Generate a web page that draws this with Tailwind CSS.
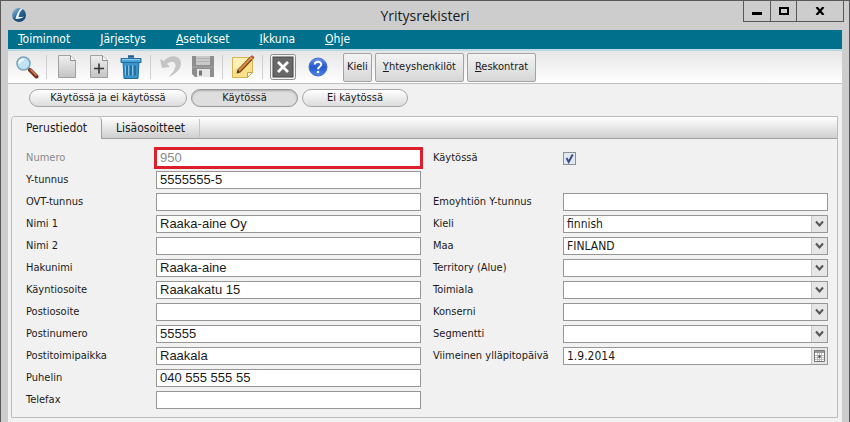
<!DOCTYPE html>
<html lang="fi">
  <head>
    <meta charset="UTF-8" />
    <meta name="viewport" content="width=device-width, initial-scale=1.0" />
    <title>Yritysrekisteri</title>
    <script src="https://cdn.jsdelivr.net/npm/@tailwindcss/browser@4"></script>
  </head>

  <body class="bg-[#cdcdcd] font-['DejaVu_Sans_Condensed','Noto_Sans',sans-serif] text-[11px] text-[#1a1a1a]">
    <div class="min-h-screen flex flex-col border-t border-x border-[#58585a] px-[7px]">
      <!-- Title bar -->
      <header class="flex items-start h-[29px]">
        <svg class="w-4 h-4 ml-[3px] mt-[6px]" viewBox="0 0 16 16" aria-hidden="true">
          <defs>
            <linearGradient id="orb" x1="0" y1="0" x2="1" y2="1">
              <stop offset="0" stop-color="#a9cbe0" />
              <stop offset=".45" stop-color="#2d6c9c" />
              <stop offset="1" stop-color="#0b3560" />
            </linearGradient>
          </defs>
          <circle cx="8" cy="8" r="7" fill="url(#orb)" />
          <path d="M9.5 1.5C7 4 5.5 8 4.5 12c3 0 6-.7 9-2.500-2 .5-4 .7-6 .5C8 7 9 4 12 1.500z" fill="#f4f8fb" />
          <path d="M2 11c2 3.500 7 4.500 11 .5-3 1.500-7 1.700-11-.5z" fill="#1c4a78" />
        </svg>
        <h1 class="flex-1 text-center text-[14px] leading-[30px] pl-[80px] font-['Open_Sans','Noto_Sans',sans-serif]">Yritysrekisteri</h1>
        <div class="flex h-[21px] mr-[-2px] border border-t-0 border-[#58585a] divide-x divide-[#58585a]">
          <button class="w-[27px] flex justify-center items-center" aria-label="Pienennä">
            <svg class="w-[10px] h-[10px]" viewBox="0 0 10 10"><path d="M0 6h10v3H0z" /></svg>
          </button>
          <button class="w-[26px] flex justify-center items-center" aria-label="Suurenna">
            <svg class="w-[10px] h-[8px]" viewBox="0 0 10 8"><path d="M1 1h8v6H1z" fill="none" stroke="#000" stroke-width="2" /></svg>
          </button>
          <button class="w-[46px] flex justify-center items-center" aria-label="Sulje">
            <svg class="w-[10px] h-[8px]" viewBox="0 0 10 8"><path d="M1.500 0l7 8M8.500 0l-7 8" stroke="#000" stroke-width="2.200" /></svg>
          </button>
        </div>
      </header>

      <main class="flex-1 bg-[#f1f1f1]">
        <!-- Menu -->
        <nav class="flex items-center gap-[30px] h-[19px] pl-[10px] bg-[#00708c] text-white text-[12px] leading-[19px]">
          <a href="#"><u>T</u>oiminnot</a>
          <a href="#"><u>J</u>ärjestys</a>
          <a href="#"><u>A</u>setukset</a>
          <a href="#"><u>I</u>kkuna</a>
          <a href="#"><u>O</u>hje</a>
        </nav>

        <!-- Toolbar -->
        <div class="flex items-center h-[35px] pl-[3px] border-t-2 border-t-[#b9d9e4] border-b border-b-[#bfbfbf] bg-linear-to-b from-[#e6e6e6] to-white">
          <button class="w-8 h-7 flex justify-center items-center" aria-label="Etsi">
            <svg class="w-6 h-6" viewBox="0 0 24 24">
              <path d="M13 13l3 3" stroke="#8a8a8a" stroke-width="2.500" />
              <path d="M15 15l6.500 6.500" stroke="#7b3320" stroke-width="4" stroke-linecap="round" />
              <path d="M15.500 14.500l6 6" stroke="#d48a63" stroke-width="1.200" />
              <circle cx="8.500" cy="8.500" r="6.500" fill="#bfe3f3" stroke="#7ba3b9" stroke-width="1.500" />
              <path d="M4.500 8.500c0-2.500 2-4 4.500-4" stroke="#fff" stroke-width="2" fill="none" />
            </svg>
          </button>
          <span class="w-px h-6 ml-[3px] mr-1 bg-[#cfcfcf]"></span>
          <button class="w-8 h-7 flex justify-center items-center" aria-label="Uusi">
            <svg class="w-6 h-6" viewBox="0 0 24 24">
              <defs>
                <linearGradient id="sheet" x1="0" y1="0" x2="0" y2="1">
                  <stop offset="0" stop-color="#f0f0f0" />
                  <stop offset="1" stop-color="#c4c4c4" />
                </linearGradient>
              </defs>
              <path d="M3.500.5h12l5 5v17h-17z" fill="url(#sheet)" stroke="#a0a0a0" />
              <path d="M15.500.5v5h5" fill="#fafafa" stroke="#8c8c8c" />
            </svg>
          </button>
          <button class="w-8 h-7 flex justify-center items-center" aria-label="Lisää kopio">
            <svg class="w-6 h-6" viewBox="0 0 24 24">
              <path d="M3.500.5h12l5 5v17h-17z" fill="url(#sheet)" stroke="#a0a0a0" />
              <path d="M15.500.5v5h5" fill="#fafafa" stroke="#8c8c8c" />
              <path d="M7 13.500h10M12 8.500v10" stroke="#333" stroke-width="1.600" />
            </svg>
          </button>
          <button class="w-8 h-7 flex justify-center items-center" aria-label="Poista">
            <svg class="w-6 h-[26px]" viewBox="0 0 24 26">
              <path d="M9 2.500h6" stroke="#1f618f" stroke-width="2.500" />
              <path d="M4 8h16l-1 16.500H5z" fill="#3a95cc" stroke="#226b9c" />
              <path d="M2 4.500h20v4H2z" fill="#4aa3d6" stroke="#226b9c" />
              <path d="M3 5.500h18" stroke="#8fcdec" />
              <path d="M8 11.500v10M12 11.500v10M16 11.500v10" stroke="#1d6697" stroke-width="1.500" />
              <path d="M9.500 11.500v10M13.500 11.500v10M6.500 11.500v10" stroke="#82c3e6" />
            </svg>
          </button>
          <span class="w-px h-6 ml-[3px] mr-1 bg-[#cfcfcf]"></span>
          <button class="w-8 h-7 flex justify-center items-center" aria-label="Kumoa">
            <svg class="w-6 h-6" viewBox="0 0 24 24">
              <path d="M1 4l2 9 8-1-3-3C11 6 16 6 16.500 10c.3 4-3 8-7 12 7-3 12.500-8 12.500-13.500C21.500 0 11-1 5 6z" fill="#c4c4c4" />
            </svg>
          </button>
          <button class="w-8 h-7 flex justify-center items-center" aria-label="Tallenna">
            <svg class="w-6 h-6" viewBox="0 0 24 24">
              <path d="M1 1h22v21H4l-3-3z" fill="#8e8e8e" />
              <path d="M5 1h14v9H5z" fill="#c9c9c9" />
              <path d="M5 3.500h14M5 6.500h14" stroke="#b2b2b2" />
              <path d="M6 14h13v8H6z" fill="#e6e6e6" />
              <path d="M8 15.500h3v5H8z" fill="#777" />
              <path d="M1 12h22" stroke="#a5a5a5" />
            </svg>
          </button>
          <span class="w-px h-6 ml-[3px] mr-1 bg-[#cfcfcf]"></span>
          <button class="w-8 h-7 flex justify-center items-center" aria-label="Muistiinpano">
            <svg class="w-6 h-6" viewBox="0 0 24 24">
              <path d="M1.500 2.500h20v15l-5 5h-15z" fill="#fae08a" stroke="#d9b452" />
              <path d="M2 3h19v4L2 15z" fill="#fdf0b8" />
              <path d="M21.500 17.500h-5v5z" fill="#fffbe6" stroke="#c7a24a" />
              <path d="M8 16L20 3.500" stroke="#7a4717" stroke-width="4" />
              <path d="M8 15.500L20 3" stroke="#dc9145" stroke-width="2" />
              <path d="M19 1.500l3.500 3 .8-2.500-2-1.700z" fill="#b65843" />
              <path d="M5.500 18.500l1-4 3 3z" fill="#4a3321" />
            </svg>
          </button>
          <span class="w-px h-6 ml-[3px] mr-1 bg-[#cfcfcf]"></span>
          <button class="w-8 h-7 flex justify-center items-center" aria-label="Sulje kortti">
            <svg class="w-[26px] h-[26px]" viewBox="0 0 26 26">
              <rect x=".5" y=".5" width="25" height="25" rx="2" fill="#f2f2f2" stroke="#8d8d8d" />
              <rect x="3" y="3" width="20" height="20" fill="#686868" stroke="#484848" />
              <path d="M8 8l10 10M18 8L8 18" stroke="#fff" stroke-width="2.800" />
            </svg>
          </button>
          <button class="w-8 h-7 ml-[3px] flex justify-center items-center" aria-label="Ohje">
            <svg class="w-5 h-5" viewBox="0 0 20 20">
              <defs>
                <linearGradient id="help" x1="0" y1="0" x2="0" y2="1">
                  <stop offset="0" stop-color="#6d97ea" />
                  <stop offset=".5" stop-color="#2458ce" />
                  <stop offset="1" stop-color="#4a86ee" />
                </linearGradient>
              </defs>
              <circle cx="10" cy="10" r="9" fill="url(#help)" stroke="#4a6cc0" />
              <path d="M6.800 7.500C7 3.800 13.300 4 13.200 7.500c0 2.200-3.200 2.300-3.200 4.700" fill="none" stroke="#fff" stroke-width="2" />
              <circle cx="10" cy="15" r="1.300" fill="#fff" />
            </svg>
          </button>
          <div class="flex gap-[3px] ml-[9px]">
            <button class="h-[29px] px-[3px] border border-[#a3a3a3] rounded-[2px] bg-linear-to-b from-[#f4f4f4] to-[#d6d6d6]">Kieli</button>
            <button class="h-[29px] px-[7px] border border-[#a3a3a3] rounded-[2px] bg-linear-to-b from-[#f4f4f4] to-[#d6d6d6]"><u>Y</u>hteyshenkilöt</button>
            <button class="h-[29px] px-[7px] border border-[#a3a3a3] rounded-[2px] bg-linear-to-b from-[#f4f4f4] to-[#d6d6d6]"><u>R</u>eskontrat</button>
          </div>
        </div>

        <!-- Filter -->
        <div class="flex gap-1 pt-[5px] pb-[9px] pl-[21px]">
          <button class="w-[158px] h-[18px] border border-[#a6a6a6] rounded-full bg-linear-to-b from-white to-[#dcdcdc] leading-4">Käytössä ja ei käytössä</button>
          <button class="w-[107px] h-[18px] border border-[#999] rounded-full bg-[#dedede] shadow-[inset_0_1px_2px_#aaa] leading-4">Käytössä</button>
          <button class="w-[106px] h-[18px] border border-[#a6a6a6] rounded-full bg-linear-to-b from-white to-[#dcdcdc] leading-4">Ei käytössä</button>
        </div>

        <!-- Card -->
        <section class="ml-[3px] mr-1 border border-[#bcbcbc] rounded-tl-[4px]">
          <div class="flex h-[22px] border-b border-[#a0a0a0] rounded-tl-[4px] bg-linear-to-b from-white to-[#cfcfcf] text-[12px]" role="tablist">
            <button class="w-[90px] h-[22px] bg-[#f1f1f1] border-r border-[#a0a0a0] rounded-t-[4px]" role="tab" aria-selected="true">Perustiedot</button>
            <button class="w-[98px] h-[18px] mt-[2px] border-r border-[#c4c4c4]" role="tab" aria-selected="false">Lisäosoitteet</button>
          </div>

          <form class="grid grid-cols-2 gap-x-3 pt-[10px] pb-2 pl-[14px] pr-[9px]">
            <div class="grid grid-cols-[130px_1fr] auto-rows-[18px] gap-y-1 content-start items-center">
              <label for="numero" class="text-[#8a8a8a]">Numero</label>
              <input id="numero" value="950" readonly class="w-full min-w-0 h-[18px] px-[3px] bg-white border border-[#979797] outline-3 outline-[#dc1f2b] -outline-offset-1 text-[#8a8a8a] font-['Liberation_Sans',sans-serif] text-[13px]" />
              <label for="ytunnus">Y-tunnus</label>
              <input id="ytunnus" value="5555555-5" class="w-full min-w-0 h-[18px] px-[3px] bg-white border border-[#979797] font-['Liberation_Sans',sans-serif] text-[13px]" />
              <label for="ovt">OVT-tunnus</label>
              <input id="ovt" class="w-full min-w-0 h-[18px] px-[3px] bg-white border border-[#979797] font-['Liberation_Sans',sans-serif] text-[13px]" />
              <label for="nimi1">Nimi 1</label>
              <input id="nimi1" value="Raaka-aine Oy" class="w-full min-w-0 h-[18px] px-[3px] bg-white border border-[#979797] font-['Liberation_Sans',sans-serif] text-[13px]" />
              <label for="nimi2">Nimi 2</label>
              <input id="nimi2" class="w-full min-w-0 h-[18px] px-[3px] bg-white border border-[#979797] font-['Liberation_Sans',sans-serif] text-[13px]" />
              <label for="hakunimi">Hakunimi</label>
              <input id="hakunimi" value="Raaka-aine" class="w-full min-w-0 h-[18px] px-[3px] bg-white border border-[#979797] font-['Liberation_Sans',sans-serif] text-[13px]" />
              <label for="katu">Käyntiosoite</label>
              <input id="katu" value="Raakakatu 15" class="w-full min-w-0 h-[18px] px-[3px] bg-white border border-[#979797] font-['Liberation_Sans',sans-serif] text-[13px]" />
              <label for="posti">Postiosoite</label>
              <input id="posti" class="w-full min-w-0 h-[18px] px-[3px] bg-white border border-[#979797] font-['Liberation_Sans',sans-serif] text-[13px]" />
              <label for="postinro">Postinumero</label>
              <input id="postinro" value="55555" class="w-full min-w-0 h-[18px] px-[3px] bg-white border border-[#979797] font-['Liberation_Sans',sans-serif] text-[13px]" />
              <label for="kaupunki">Postitoimipaikka</label>
              <input id="kaupunki" value="Raakala" class="w-full min-w-0 h-[18px] px-[3px] bg-white border border-[#979797] font-['Liberation_Sans',sans-serif] text-[13px]" />
              <label for="puhelin">Puhelin</label>
              <input id="puhelin" value="040 555 555 55" class="w-full min-w-0 h-[18px] px-[3px] bg-white border border-[#979797] font-['Liberation_Sans',sans-serif] text-[13px]" />
              <label for="telefax">Telefax</label>
              <input id="telefax" class="w-full min-w-0 h-[18px] px-[3px] bg-white border border-[#979797] font-['Liberation_Sans',sans-serif] text-[13px]" />
            </div>

            <div class="grid grid-cols-[130px_1fr] auto-rows-[18px] gap-y-1 content-start items-center">
              <label for="kaytossa">Käytössä</label>
              <div class="relative w-[13px] h-[13px]">
                <input id="kaytossa" type="checkbox" checked class="peer block appearance-none w-[13px] h-[13px] border border-[#8e8f8f] bg-[#e3e9f3]" />
                <svg class="absolute inset-0 w-[13px] h-[13px] pointer-events-none invisible peer-checked:visible" viewBox="0 0 13 13">
                  <path d="M3.500 6l2.200 4L9.700 2.500" fill="none" stroke="#3a4f86" stroke-width="2" />
                </svg>
              </div>
              <div class="col-span-2"></div>
              <label for="emo">Emoyhtiön Y-tunnus</label>
              <input id="emo" class="w-full min-w-0 h-[18px] px-[3px] bg-white border border-[#979797] text-[12px]" />
              <label for="kieli">Kieli</label>
              <div class="relative">
                <select id="kieli" class="block appearance-none w-full h-[18px] pl-[3px] pr-5 bg-white border border-[#979797] text-[12px] leading-4"><option>finnish</option></select>
                <svg class="absolute right-px top-px w-4 h-4 bg-[#e6e6e6] border-l border-[#c8c8c8] pointer-events-none" viewBox="0 0 15 16"><path d="M4 5.500l3.500 4 3.500-4" fill="none" stroke="#555" stroke-width="2" /></svg>
              </div>
              <label for="maa">Maa</label>
              <div class="relative">
                <select id="maa" class="block appearance-none w-full h-[18px] pl-[3px] pr-5 bg-white border border-[#979797] text-[12px] leading-4"><option>FINLAND</option></select>
                <svg class="absolute right-px top-px w-4 h-4 bg-[#e6e6e6] border-l border-[#c8c8c8] pointer-events-none" viewBox="0 0 15 16"><path d="M4 5.500l3.500 4 3.500-4" fill="none" stroke="#555" stroke-width="2" /></svg>
              </div>
              <label for="territory">Territory (Alue)</label>
              <div class="relative">
                <select id="territory" class="block appearance-none w-full h-[18px] pl-[3px] pr-5 bg-white border border-[#979797] text-[12px] leading-4"><option></option></select>
                <svg class="absolute right-px top-px w-4 h-4 bg-[#e6e6e6] border-l border-[#c8c8c8] pointer-events-none" viewBox="0 0 15 16"><path d="M4 5.500l3.500 4 3.500-4" fill="none" stroke="#555" stroke-width="2" /></svg>
              </div>
              <label for="toimiala">Toimiala</label>
              <div class="relative">
                <select id="toimiala" class="block appearance-none w-full h-[18px] pl-[3px] pr-5 bg-white border border-[#979797] text-[12px] leading-4"><option></option></select>
                <svg class="absolute right-px top-px w-4 h-4 bg-[#e6e6e6] border-l border-[#c8c8c8] pointer-events-none" viewBox="0 0 15 16"><path d="M4 5.500l3.500 4 3.500-4" fill="none" stroke="#555" stroke-width="2" /></svg>
              </div>
              <label for="konserni">Konserni</label>
              <div class="relative">
                <select id="konserni" class="block appearance-none w-full h-[18px] pl-[3px] pr-5 bg-white border border-[#979797] text-[12px] leading-4"><option></option></select>
                <svg class="absolute right-px top-px w-4 h-4 bg-[#e6e6e6] border-l border-[#c8c8c8] pointer-events-none" viewBox="0 0 15 16"><path d="M4 5.500l3.500 4 3.500-4" fill="none" stroke="#555" stroke-width="2" /></svg>
              </div>
              <label for="segmentti">Segmentti</label>
              <div class="relative">
                <select id="segmentti" class="block appearance-none w-full h-[18px] pl-[3px] pr-5 bg-white border border-[#979797] text-[12px] leading-4"><option></option></select>
                <svg class="absolute right-px top-px w-4 h-4 bg-[#e6e6e6] border-l border-[#c8c8c8] pointer-events-none" viewBox="0 0 15 16"><path d="M4 5.500l3.500 4 3.500-4" fill="none" stroke="#555" stroke-width="2" /></svg>
              </div>
              <label for="paiva">Viimeinen ylläpitopäivä</label>
              <div class="flex h-[18px] bg-white border border-[#979797]">
                <input id="paiva" value="1.9.2014" class="flex-1 min-w-0 px-[3px] text-[12px]" />
                <button type="button" class="w-4 flex justify-center items-center bg-[#e6e6e6] border-l border-[#c8c8c8]" aria-label="Kalenteri">
                  <svg class="w-[11px] h-3" viewBox="0 0 11 12">
                    <path d="M.5.500h10v11H.5z" fill="#fff" stroke="#777" />
                    <path d="M1 1h9v2H1z" fill="#999" />
                    <path d="M1 5.500h9M1 7.500h9M1 9.500h9M3.500 3v8M5.500 3v8M7.500 3v8" stroke="#aaa" stroke-width=".8" />
                    <path d="M4.500 5.500h2v2h-2z" fill="#333" />
                  </svg>
                </button>
              </div>
            </div>
          </form>
        </section>
      </main>
    </div>
  </body>
</html>
